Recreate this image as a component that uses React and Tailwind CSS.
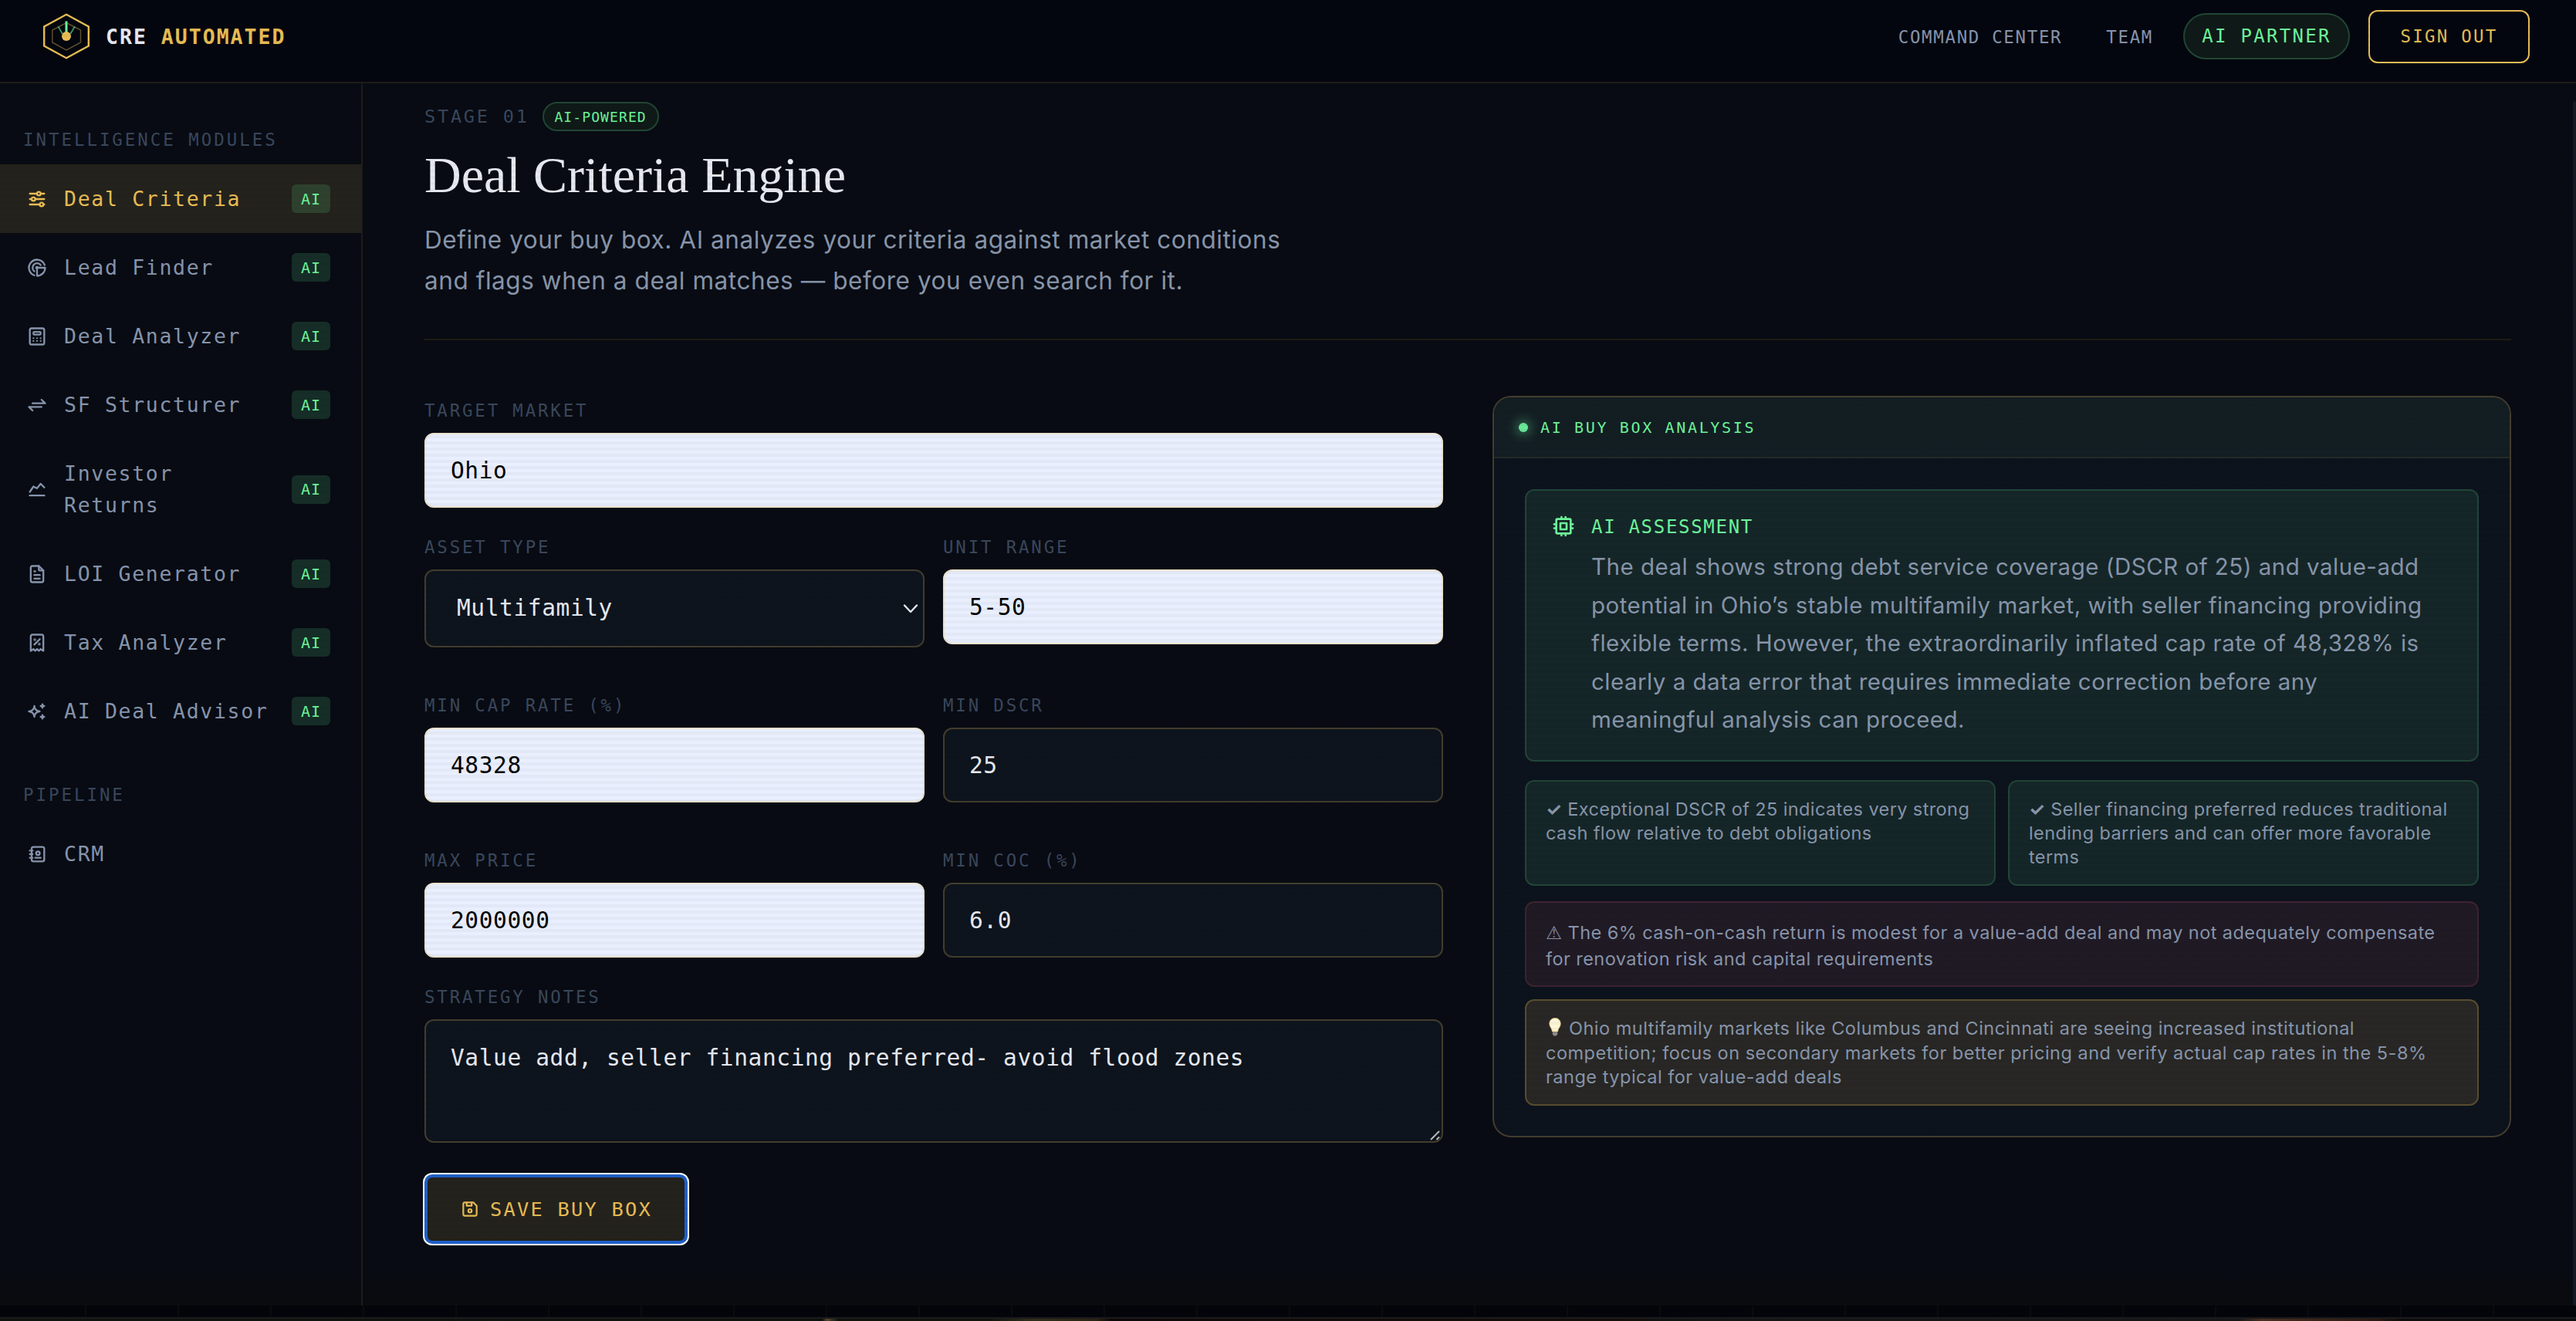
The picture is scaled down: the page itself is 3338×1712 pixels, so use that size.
import {
  TbAdjustmentsHorizontal, TbRadar, TbCalculator, TbArrowsExchange, TbChartLine,
  TbFileText, TbReceiptTax, TbSparkles, TbAddressBook, TbCpu, TbDeviceFloppy,
} from "react-icons/tb";

const MODULES = [
  { label: "Deal Criteria",   Icon: TbAdjustmentsHorizontal, active: true },
  { label: "Lead Finder",     Icon: TbRadar },
  { label: "Deal Analyzer",   Icon: TbCalculator },
  { label: "SF Structurer",   Icon: TbArrowsExchange },
  { label: "Investor Returns", Icon: TbChartLine },
  { label: "LOI Generator",   Icon: TbFileText },
  { label: "Tax Analyzer",    Icon: TbReceiptTax },
  { label: "AI Deal Advisor", Icon: TbSparkles },
];

function Logo() {
  return (
    <svg width="60" height="60" viewBox="0 0 60 60" fill="none" className="flex-shrink-0">
      <path d="M30 1.8 58.8 17.5V42.5L30 58.2 1.2 42.5V17.5Z" stroke="#e8bd55" strokeWidth="2.4" />
      <path d="M30 12.5 48.5 22V38L30 48 11.8 38V22Z" stroke="#e8bd55" strokeWidth="1.5" opacity="0.4" />
      <path d="M19.5 17.5 25 27M40.8 17.5 35.2 27" stroke="#6ef59b" strokeWidth="1.8" opacity="0.6" />
      <path d="M30 10.5V25" stroke="#6ef59b" strokeWidth="3" />
      <circle cx="30" cy="30" r="6" fill="#e8bd55" />
    </svg>
  );
}

function NavItem({ label, Icon, active, badge = true }) {
  return (
    <a className={`flex items-center pl-[34px] pr-10 py-[24px] ${active ? "bg-[#24221c] text-[#e8bd55]" : "text-[#8795ad]"}`}>
      <Icon size={28} className="flex-shrink-0" />
      <span className="ml-[21px] mr-5 flex-1 text-[26.5px] leading-[41px] tracking-[1.68px]">
        {label}
      </span>
      {badge && (
        <span className="w-[50px] h-[37px] flex-shrink-0 rounded-md bg-[#6ef59b]/15 text-[#6ef59b] text-[20px] flex items-center justify-center tracking-[0.9px]">
          AI
        </span>
      )}
    </a>
  );
}

function SectionLabel({ children }) {
  return <div className="pl-[30px] h-[38px] leading-[38px] text-[22.4px] tracking-[3px] text-[#3a475c]">{children}</div>;
}

function Field({ label, children }) {
  return (
    <div className="flex flex-col">
      <label className="h-[38px] leading-[38px] mb-[10px] text-[22.4px] tracking-[2.85px] text-[#3a475c]">{label}</label>
      {children}
    </div>
  );
}

function Input({ value, filled }) {
  return (
    <input
      defaultValue={value}
      className={`w-full h-[97px] rounded-xl border-2 px-8 text-[29.5px] tracking-[0.6px] outline-none ${
        filled ? "bg-[#e9effe] border-[#ebe3d0] text-black" : "bg-[#0d141d] border-[#433d2d] text-[#e8eaf2]"
      }`}
    />
  );
}

// light bulb drawn in place of the emoji
function Bulb() {
  return (
    <svg width="20" height="24" viewBox="0 0 20 24" className="inline-block ml-[2px] mr-[8px] -mt-[7px]">
      <path d="M10 0.5C5.5 .5 2.8 3.8 2.8 7.8c0 4 3.2 5.600 3.700 10.200h7c.5-4.600 3.700-6.200 3.700-10.200C17.200 3.800 14.500.5 10 .5Z" fill="#fff6d8" stroke="#f0cf80" strokeWidth="0.8" />
      <path d="M6.800 18.500h6.400v3.200l-1.700 1.800h-3l-1.700-1.800Z" fill="#8d8a86" />
    </svg>
  );
}

function Header() {
  return (
    <header className="h-[108px] flex-shrink-0 border-b-2 border-[#1e1c18] bg-[#03060e] flex items-start justify-between pl-14 pr-[60px]">
      <div className="flex items-center gap-[21px] mt-[17px]">
        <Logo />
        <div className="mt-[2px] text-[26.5px] font-bold tracking-[2px] text-[#e8eaf2]">
          CRE <span className="text-[#e8bd55]">AUTOMATED</span>
        </div>
      </div>
      <nav className="flex items-center mt-[13px] h-[69px] text-[#8795ad] text-[22.4px]">
        <a className="mt-[2px] tracking-[1.7px]">COMMAND CENTER</a>
        <a className="mt-[2px] ml-[57px] tracking-[1.7px]">TEAM</a>
        <a className="ml-[39px] w-[216px] h-[60px] -mt-[1px] rounded-full border-2 border-[#214634] bg-[#0f1a18] text-[#6ef59b] text-[24px] tracking-[2.3px] flex items-center justify-center">
          AI PARTNER
        </a>
        <a className="ml-6 w-[209px] h-[69px] rounded-xl border-2 border-[#e8bd55] text-[#e8bd55] tracking-[2.3px] flex items-center justify-center">
          SIGN OUT
        </a>
      </nav>
    </header>
  );
}

function Sidebar() {
  return (
    <aside className="w-[470px] flex-shrink-0 border-r-2 border-[#1e1d1a] pt-[54px]">
      <SectionLabel>INTELLIGENCE MODULES</SectionLabel>
      <div className="mt-[13px]">
        {MODULES.map((m) => <NavItem key={m.label} {...m} />)}
      </div>
      <div className="mt-[45px]">
        <SectionLabel>PIPELINE</SectionLabel>
      </div>
      <div className="mt-[13px]">
        <NavItem label="CRM" Icon={TbAddressBook} badge={false} />
      </div>
    </aside>
  );
}

function CriteriaForm() {
  return (
    <form className="w-[1320px]">
      <Field label="TARGET MARKET"><Input value="Ohio" filled /></Field>
      <div className="mt-8 grid grid-cols-2 gap-x-6 gap-y-14">
        <Field label="ASSET TYPE">
          <div className="h-[101px] rounded-xl border-2 border-[#433d2d] bg-[#0d141d] text-[#e8eaf2] pl-10 pr-[6px] flex items-center justify-between text-[29.5px] tracking-[0.6px]">
            Multifamily
            <svg width="20" height="12" viewBox="0 0 20 12" fill="none" stroke="#e8eaf2" strokeWidth="2.4" strokeLinecap="round" strokeLinejoin="round">
              <path d="M2 1.500 10 10l8-8.500" />
            </svg>
          </div>
        </Field>
        <Field label="UNIT RANGE"><Input value="5-50" filled /></Field>
        <Field label="MIN CAP RATE (%)"><Input value="48328" filled /></Field>
        <Field label="MIN DSCR"><Input value="25" /></Field>
        <Field label="MAX PRICE"><Input value="2000000" filled /></Field>
        <Field label="MIN COC (%)"><Input value="6.0" /></Field>
      </div>
      <div className="mt-8">
        <Field label="STRATEGY NOTES">
          <div className="relative h-[160px]">
            <textarea
              defaultValue="Value add, seller financing preferred- avoid flood zones"
              className="block w-full h-full rounded-xl border-2 border-[#433d2d] bg-[#0d141d] text-[#e8eaf2] px-8 py-[26px] leading-[44px] text-[29.5px] tracking-[0.6px] outline-none resize-none"
            />
            <svg width="14" height="14" viewBox="0 0 14 14" stroke="#b9bbbd" strokeWidth="2" className="absolute right-[3px] bottom-[3px]">
              <path d="M1 13 12 2M8.500 13 12 9.500" />
            </svg>
          </div>
        </Field>
      </div>
      <button
        type="button"
        className="mt-[41px] w-[341px] h-[90px] rounded-[10px] border-4 border-[#2060c8] ring-2 ring-white bg-[#24221c] text-[#e8bd55] text-[25.4px] tracking-[2.2px] flex items-center justify-center gap-[13px]"
      >
        <TbDeviceFloppy size={26} /> SAVE BUY BOX
      </button>
    </form>
  );
}

function AnalysisPanel() {
  return (
    <section className="w-[1320px] h-[961px] rounded-3xl border-2 border-[#433d2d] bg-[#0c131d] overflow-hidden">
      <div className="h-[79px] border-b-2 border-[#242a22] bg-[#131e23] flex items-center pl-8 gap-4 text-[#6ef59b] text-[20px] tracking-[2.65px]">
        <span className="w-3 h-3 rounded-full bg-[#69e898] shadow-[0_0_16px_#69e898]" />
        AI BUY BOX ANALYSIS
      </div>
      <div className="p-10 font-['Inter',sans-serif] text-[#8896ab] whitespace-nowrap">
        <div className="h-[353px] rounded-xl border-2 border-[#214538] bg-[#152628] pt-7 pl-8 flex gap-[20px]">
          <TbCpu size={32} className="text-[#6ef59b] flex-shrink-0 mt-[2px]" />
          <div>
            <div className="h-[38px] leading-[38px] font-['DejaVu_Sans_Mono',monospace] text-[24px] tracking-[1.7px] text-[#6ef59b]">AI ASSESSMENT</div>
            <p className="mt-[8px] text-[29.5px] leading-[49.5px] tracking-[0.49px]">
              The deal shows strong debt service coverage (DSCR of 25) and value-add<br />
              potential in Ohio’s stable multifamily market, with seller financing providing<br />
              flexible terms. However, the extraordinarily inflated cap rate of 48,328% is<br />
              clearly a data error that requires immediate correction before any<br />
              meaningful analysis can proceed.
            </p>
          </div>
        </div>
        <div className="mt-6 grid grid-cols-2 gap-4 text-[23.5px] leading-[31px] tracking-[0.4px]">
          <div className="h-[137px] rounded-xl border-2 border-[#214538] bg-[#152628] px-[25px] py-[20px]">
            <span className="font-bold">✓</span> Exceptional DSCR of 25 indicates very strong<br />
            cash flow relative to debt obligations
          </div>
          <div className="h-[137px] rounded-xl border-2 border-[#214538] bg-[#152628] px-[25px] py-[20px]">
            <span className="font-bold">✓</span> Seller financing preferred reduces traditional<br />
            lending barriers and can offer more favorable<br />
            terms
          </div>
        </div>
        <div className="mt-5 h-[111px] rounded-xl border-2 border-[#40222f] bg-[#201a25] px-[25px] py-[22px] text-[23.5px] leading-[33px] tracking-[0.44px]">
          <span className="font-['DejaVu_Sans',sans-serif]">⚠</span> The 6% cash-on-cash return is modest for a value-add deal and may not adequately compensate<br />
          for renovation risk and capital requirements
        </div>
        <div className="mt-4 h-[138px] rounded-xl border-2 border-[#5a4d2e] bg-[#282725] px-[25px] py-[20px] text-[23.5px] leading-[31.7px] tracking-[0.5px]">
          <Bulb />Ohio multifamily markets like Columbus and Cincinnati are seeing increased institutional<br />
          competition; focus on secondary markets for better pricing and verify actual cap rates in the 5-8%<br />
          range typical for value-add deals
        </div>
      </div>
    </section>
  );
}

export default function App() {
  return (
    <div className="relative w-[3338px] h-[1712px] overflow-hidden flex flex-col bg-[#080b13] font-['DejaVu_Sans_Mono',monospace]">
      <Header />
      <div className="flex h-[1584px] flex-shrink-0 bg-[linear-gradient(to_bottom,#080b13_97%,#0a0b0e_100%)]">
        <Sidebar />
        <main className="flex-1 pl-20 pt-6">
          <div className="flex items-center h-[38px] text-[23.5px] tracking-[2.8px] text-[#3a475c]">
            <span className="mt-[2px]">STAGE 01</span>
            <span className="ml-[17px] w-[151px] h-[38px] rounded-full border-2 border-[#214634] bg-[#0f1a18] text-[#6ef59b] text-[18px] tracking-[1.1px] flex items-center justify-center">
              AI-POWERED
            </span>
          </div>
          <h1 className="mt-[17px] h-[80px] leading-[80px] font-['Liberation_Serif',serif] text-[66px] text-[#e8eaf2] whitespace-nowrap">Deal Criteria Engine</h1>
          <p className="mt-[17px] font-['Inter',sans-serif] text-[31.5px] leading-[53px] tracking-[0.56px] text-[#8896ab] whitespace-nowrap">
            Define your buy box. AI analyzes your criteria against market conditions<br />
            and flags when a deal matches — before you even search for it.
          </p>
          <div className="mt-[49px] w-[2704px] h-[2px] bg-[#1e1c18]" />
          <div className="mt-[72px] flex gap-16 items-start">
            <CriteriaForm />
            <AnalysisPanel />
          </div>
        </main>
        <div className="w-1 mt-[23px] bg-[#141a26] rounded-full" />
      </div>

      {/* page edge and the sliver of wallpaper under the window */}
      <div className="h-[15px] flex-shrink-0 bg-[#04050a] bg-[repeating-linear-gradient(to_right,transparent_0px,transparent_110px,#0a0b0e_110px,#0a0b0e_112px,transparent_112px,transparent_120px)]" />
      <div className="h-[2px] flex-shrink-0 bg-[#1b1b1e]" />
      <div className="flex-1 bg-[linear-gradient(to_right,#0d150e_0px,#0c120c_1065px,#5a4a2c_1072px,#0f140c_1086px,#0f140c_1280px,#33301a_1340px,#2a2412_1420px,#0d0908_1440px,#160d09_2120px,#101512_2150px,#17171a_2900px,#4a2f1e_2930px,#2a1a12_3080px,#0e0c0b_3110px,#0c0e12_3338px)]" />

      {/* scanlines over everything */}
      <div className="absolute inset-0 pointer-events-none bg-[repeating-linear-gradient(to_bottom,transparent_0px,transparent_4px,rgba(0,0,0,0.03)_4px,rgba(0,0,0,0.03)_8px)]" />
    </div>
  );
}
